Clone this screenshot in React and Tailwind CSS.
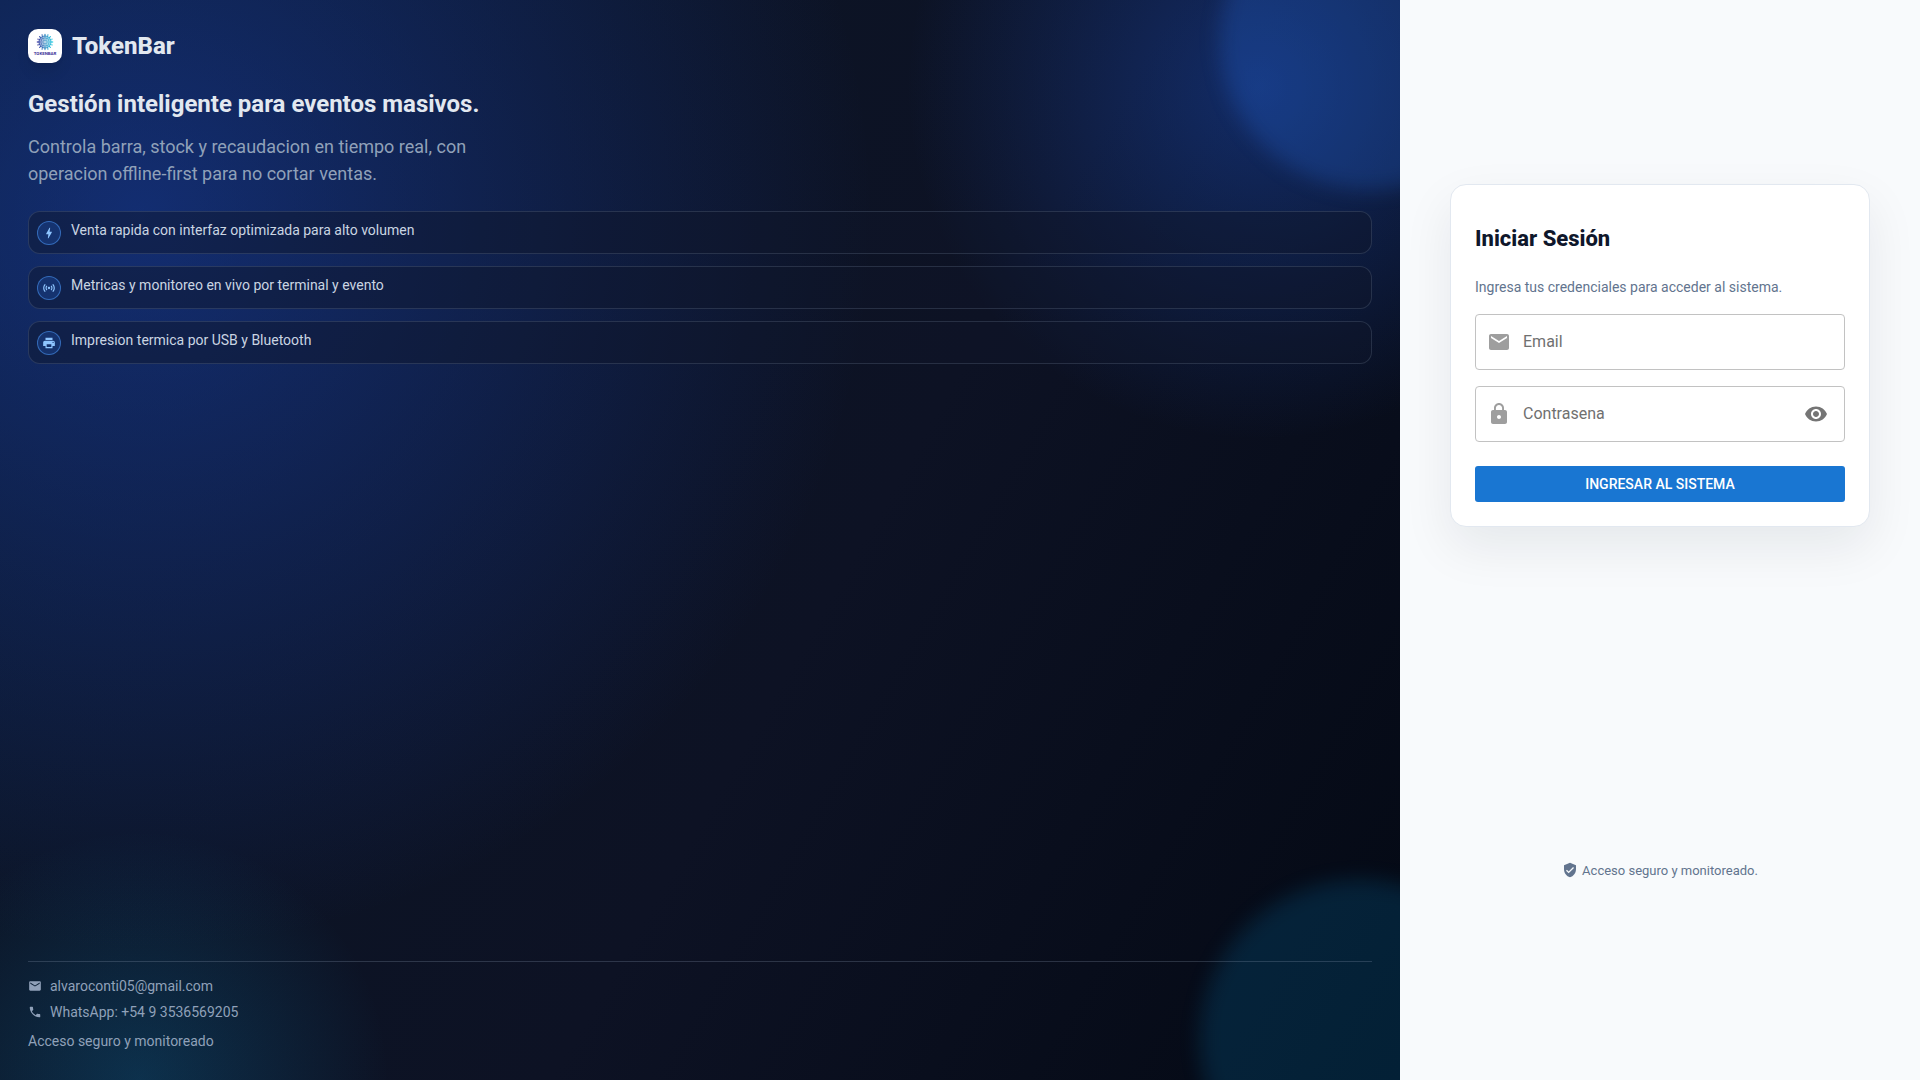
import { useState } from "react";
import {
  MdBolt,
  MdEmail,
  MdLock,
  MdPhone,
  MdPrint,
  MdSensors,
  MdVerifiedUser,
  MdVisibility,
  MdVisibilityOff,
} from "react-icons/md";

const FEATURES = [
  { icon: MdBolt, text: "Venta rapida con interfaz optimizada para alto volumen" },
  { icon: MdSensors, text: "Metricas y monitoreo en vivo por terminal y evento" },
  { icon: MdPrint, text: "Impresion termica por USB y Bluetooth" },
];

export default function App() {
  return (
    <div className="flex min-h-screen font-[Roboto,sans-serif]">
      <BrandPanel />
      <LoginPanel />
    </div>
  );
}

function BrandPanel() {
  return (
    <section className="relative flex flex-1 flex-col overflow-hidden bg-[radial-gradient(circle_at_10%_20%,rgba(29,78,216,0.42),transparent_48%),radial-gradient(circle_at_90%_8%,rgba(29,88,216,0.38),transparent_22%),radial-gradient(circle_at_10%_100%,rgba(14,165,233,0.2),transparent_15%),linear-gradient(120deg,#0b1728_0%,#0d1224_58%,#040914_100%)] p-7 text-slate-200">
      {/* Soft glow circles in the right corners */}
      <div className="absolute -right-[120px] -top-[110px] h-[300px] w-[300px] rounded-full bg-blue-500/20 blur-[10px]" />
      <div className="absolute -bottom-[120px] -right-[120px] h-[320px] w-[320px] rounded-full bg-sky-500/15 blur-[10px]" />

      <div className="relative flex flex-1 flex-col">
        <header className="flex items-center gap-2.5">
          <Logo />
          <span className="text-2xl leading-9 font-extrabold">TokenBar</span>
        </header>

        <h1 className="mt-6 text-2xl leading-8 font-bold">Gestión inteligente para eventos masivos.</h1>
        <p className="mt-[13px] max-w-[480px] text-lg leading-[27px] text-slate-400">
          Controla barra, stock y recaudacion en tiempo real, con operacion offline-first para no cortar ventas.
        </p>

        <ul className="mt-6 flex flex-col gap-3">
          {FEATURES.map(({ icon: Icon, text }) => (
            <li
              key={text}
              className="flex items-start gap-2.5 rounded-xl border border-slate-400/20 bg-[#0f172a]/45 p-2"
            >
              <span className="mt-px flex h-6 w-6 items-center justify-center rounded-full border border-blue-400/50 bg-blue-500/20 text-blue-300">
                <Icon size={14} />
              </span>
              <span className="text-sm leading-5 text-slate-300">{text}</span>
            </li>
          ))}
        </ul>

        <footer className="mt-auto flex flex-col border-t border-slate-400/25 pt-3.5 pb-px text-sm text-slate-400">
          <div className="flex items-center gap-2">
            <MdEmail size={14} />
            <span>alvaroconti05@gmail.com</span>
          </div>
          <div className="mt-1.5 flex items-center gap-2">
            <MdPhone size={14} />
            <span>WhatsApp: +54 9 3536569205</span>
          </div>
          <div className="mt-[9px]">Acceso seguro y monitoreado</div>
        </footer>
      </div>
    </section>
  );
}

function LoginPanel() {
  const [showPassword, setShowPassword] = useState(false);

  return (
    <main className="flex w-[520px] shrink-0 flex-col bg-slate-50 pb-3.5">
      <div className="flex flex-[2] items-center justify-center px-12">
        <form
          onSubmit={(e) => e.preventDefault()}
          className="w-full max-w-[420px] rounded-2xl border border-slate-200 bg-white p-6 shadow-[0_20px_50px_rgba(15,23,42,0.08)]"
        >
          <h2 className="mt-3.5 text-[22px] leading-8 font-extrabold text-slate-900">Iniciar Sesión</h2>
          <p className="mt-[22px] text-sm leading-5 text-slate-500">Ingresa tus credenciales para acceder al sistema.</p>

          <div className="mt-[17px] flex h-14 items-center gap-3 rounded border border-[#c2c2c2] px-[11px]">
            <MdEmail size={24} className="shrink-0 text-[#9e9e9e]" />
            <input
              type="email"
              aria-label="Email"
              placeholder="Email"
              className="min-w-0 flex-1 text-base text-slate-900 outline-none placeholder:text-[#707070]"
            />
          </div>

          <div className="mt-4 flex h-14 items-center gap-3 rounded border border-[#c2c2c2] px-[11px]">
            <MdLock size={24} className="shrink-0 text-[#9e9e9e]" />
            <input
              type={showPassword ? "text" : "password"}
              aria-label="Contrasena"
              placeholder="Contrasena"
              className="min-w-0 flex-1 text-base text-slate-900 outline-none placeholder:text-[#707070]"
            />
            <button
              type="button"
              aria-label="Mostrar contrasena"
              onClick={() => setShowPassword((s) => !s)}
              className="mr-[5px] text-[#757575]"
            >
              {showPassword ? <MdVisibilityOff size={24} /> : <MdVisibility size={24} />}
            </button>
          </div>

          <button
            type="submit"
            className="mt-6 h-9 w-full rounded-[3px] bg-[#1976d2] text-sm font-medium text-white uppercase hover:bg-[#1565c0]"
          >
            Ingresar al sistema
          </button>
        </form>
      </div>

      <div className="flex flex-1 items-center justify-center">
        <div className="flex items-center gap-1 pb-9 text-[13px] text-slate-500">
          <MdVerifiedUser size={16} />
          <span>Acceso seguro y monitoreado.</span>
        </div>
      </div>
    </main>
  );
}

// Ring of dots fading from indigo to cyan, above the small wordmark.
function Logo() {
  const rings = [
    { r: 2, n: 6, size: 0.7 },
    { r: 4, n: 12, size: 0.8 },
    { r: 6, n: 16, size: 1 },
    { r: 7.6, n: 16, size: 0.7 },
  ];
  return (
    <svg viewBox="0 0 34 34" className="h-[34px] w-[34px] rounded-[10px] bg-white shadow-lg" aria-hidden="true">
      <defs>
        <linearGradient id="dots" gradientUnits="userSpaceOnUse" x1="9" y1="0" x2="25" y2="0">
          <stop offset="0" stopColor="#4038a0" />
          <stop offset="0.5" stopColor="#3b8fc4" />
          <stop offset="1" stopColor="#35d3e6" />
        </linearGradient>
      </defs>
      <g fill="url(#dots)">
        <circle cx="17" cy="13" r="6.4" opacity="0.4" />
        {rings.map(({ r, n, size }) =>
          Array.from({ length: n }, (_, i) => {
            const a = (i / n) * Math.PI * 2;
            return <circle key={`${r}-${i}`} cx={17 + r * Math.cos(a)} cy={13 + r * Math.sin(a)} r={size} />;
          })
        )}
      </g>
      <text x="17" y="26" textAnchor="middle" fontSize="4.4" fontWeight="700" fill="#3b2f96">
        TOKENBAR
      </text>
    </svg>
  );
}
